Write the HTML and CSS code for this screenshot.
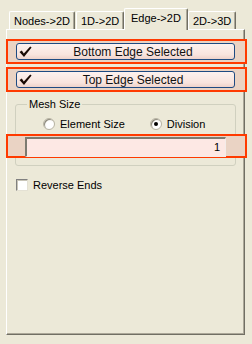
FILE: index.html
```html
<!DOCTYPE html>
<html>
<head>
<meta charset="utf-8">
<link rel="stylesheet" href="styles.css">
</head>
<body>
<div class="win">
  <div class="tabs">
    <div class="tab t1">Nodes-&gt;2D</div>
    <div class="tab t2">1D-&gt;2D</div>
    <div class="tab sel">Edge-&gt;2D</div>
    <div class="tab t4">2D-&gt;3D</div>
  </div>
  <div class="panel">
    <div class="hl btnrow first">
      <div class="btn">
        <svg class="check" width="13" height="12" viewBox="0 0 13 12"><polygon points="0.5,6 2.8,4.6 4.8,7.6 11.2,0.6 12.6,1.6 5,11" fill="#1a0a04"/></svg>
        <span class="btxt">Bottom Edge Selected</span>
      </div>
    </div>
    <div class="hl btnrow">
      <div class="btn">
        <svg class="check" width="13" height="12" viewBox="0 0 13 12"><polygon points="0.5,6 2.8,4.6 4.8,7.6 11.2,0.6 12.6,1.6 5,11" fill="#1a0a04"/></svg>
        <span class="btxt">Top Edge Selected</span>
      </div>
    </div>
    <fieldset class="group">
      <legend class="legend">Mesh Size</legend>
      <div class="radios">
        <label class="radio"><span class="circle"></span>Element Size</label>
        <label class="radio on"><span class="circle"><span class="dot"></span></span>Division</label>
      </div>
      <div class="hl inrow">
        <div class="input">1</div>
      </div>
    </fieldset>
    <label class="chk"><span class="box"></span>Reverse Ends</label>
  </div>
</div>
</body>
</html>
```
FILE: styles.css
```css
* { box-sizing: border-box; }
html, body { margin: 0; padding: 0; }
body {
  background: #ece9d8;
  font-family: "Liberation Sans", Arial, sans-serif;
  font-size: 11px;
  color: #000;
  width: 252px;
  height: 344px;
  overflow: hidden;
}
.win { padding: 8px 0 0 6px; }
.tabs {
  display: flex;
  align-items: flex-end;
  padding-left: 3px;
  height: 22px;
  position: relative;
  z-index: 2;
  margin-bottom: -1px;
}
.tab {
  height: 18px;
  margin-bottom: 1px;
  border: 1px solid #fff;
  border-right: 1px solid #716f64;
  border-bottom: none;
  border-radius: 2px 2px 0 0;
  box-shadow: inset -1px 0 #aca899;
  padding: 3px 0 0 4px;
  line-height: 13px;
  white-space: nowrap;
}
.t1 { width: 66px; }
.t2 { width: 48px; margin-left: 1px; }
.t4 { width: 48px; }
.tab.sel {
  height: 22px;
  margin-bottom: 0;
  width: 64px;
  padding: 3px 0 0 6px;
  background: #ece9d8;
}
.panel {
  width: 239px;
  height: 306px;
  border-top: 1px solid #fff;
  border-left: 1px solid #fff;
  border-right: 1px solid #716f64;
  border-bottom: 1px solid #716f64;
  box-shadow: inset -1px -1px #aca899;
  padding-top: 9px;
  position: relative;
  z-index: 1;
}
.hl {
  border: 2px solid #ff3a00;
  background: #ead3c4;
}
.btnrow {
  width: 241px;
  height: 25px;
  margin-left: -1px;
  padding: 2px 10px 2px 8px;
  margin-bottom: 3px;
}
.btn {
  height: 17px;
  border: 1px solid #1e4a82;
  border-radius: 3px;
  background: linear-gradient(#fdf1ee, #f8e4de 70%, #eed2ca);
  display: flex;
  align-items: center;
  padding-left: 2px;
}
.check { flex: none; }
.btxt {
  flex: 1;
  text-align: center;
  font-size: 12px;
  line-height: 14px;
  color: #111;
}
.group {
  margin: 6px 0 0 8px;
  width: 221px;
  height: 68px;
  border: 1px solid #d0d0bf;
  border-radius: 3px;
  padding: 0;
  min-width: 0;
}
.legend {
  margin-left: 11px;
  padding: 0 2px;
  line-height: 12px;
  color: #000;
}
.radios {
  display: flex;
  padding: 5px 0 0 27px;
  height: 22px;
  align-items: center;
}
.radio {
  display: flex;
  align-items: center;
  gap: 5px;
}
.radio.on { margin-left: 25px; }
.circle {
  width: 12px;
  height: 12px;
  border-radius: 50%;
  border: 1px solid #b8b4a4;
  background: radial-gradient(circle at 60% 60%, #fff 40%, #e6e3d6 100%);
  box-shadow: inset 1px 1px #8e8b7e;
  display: flex;
  align-items: center;
  justify-content: center;
}
.dot { width: 4px; height: 4px; border-radius: 50%; background: #000; }
.inrow {
  width: 241px;
  height: 24px;
  margin: 2px 0 0 -10px;
  padding: 1px 19px 0 17px;
}
.input {
  height: 20px;
  border-top: 2px solid #7c7a70;
  border-left: 2px solid #7c7a70;
  border-right: 1px solid #f4ece9;
  border-bottom: 1px solid #f4ece9;
  background: #fde8e4;
  text-align: right;
  padding-right: 5px;
  line-height: 16px;
}
.chk {
  display: flex;
  align-items: center;
  gap: 5px;
  margin: 13px 0 0 9px;
}
.box {
  width: 12px;
  height: 12px;
  border-top: 1px solid #808080;
  border-left: 1px solid #808080;
  border-right: 1px solid #e4e1d4;
  border-bottom: 1px solid #e4e1d4;
  background: #fff;
  box-shadow: inset 1px 1px #c8c5b8;
}
```
